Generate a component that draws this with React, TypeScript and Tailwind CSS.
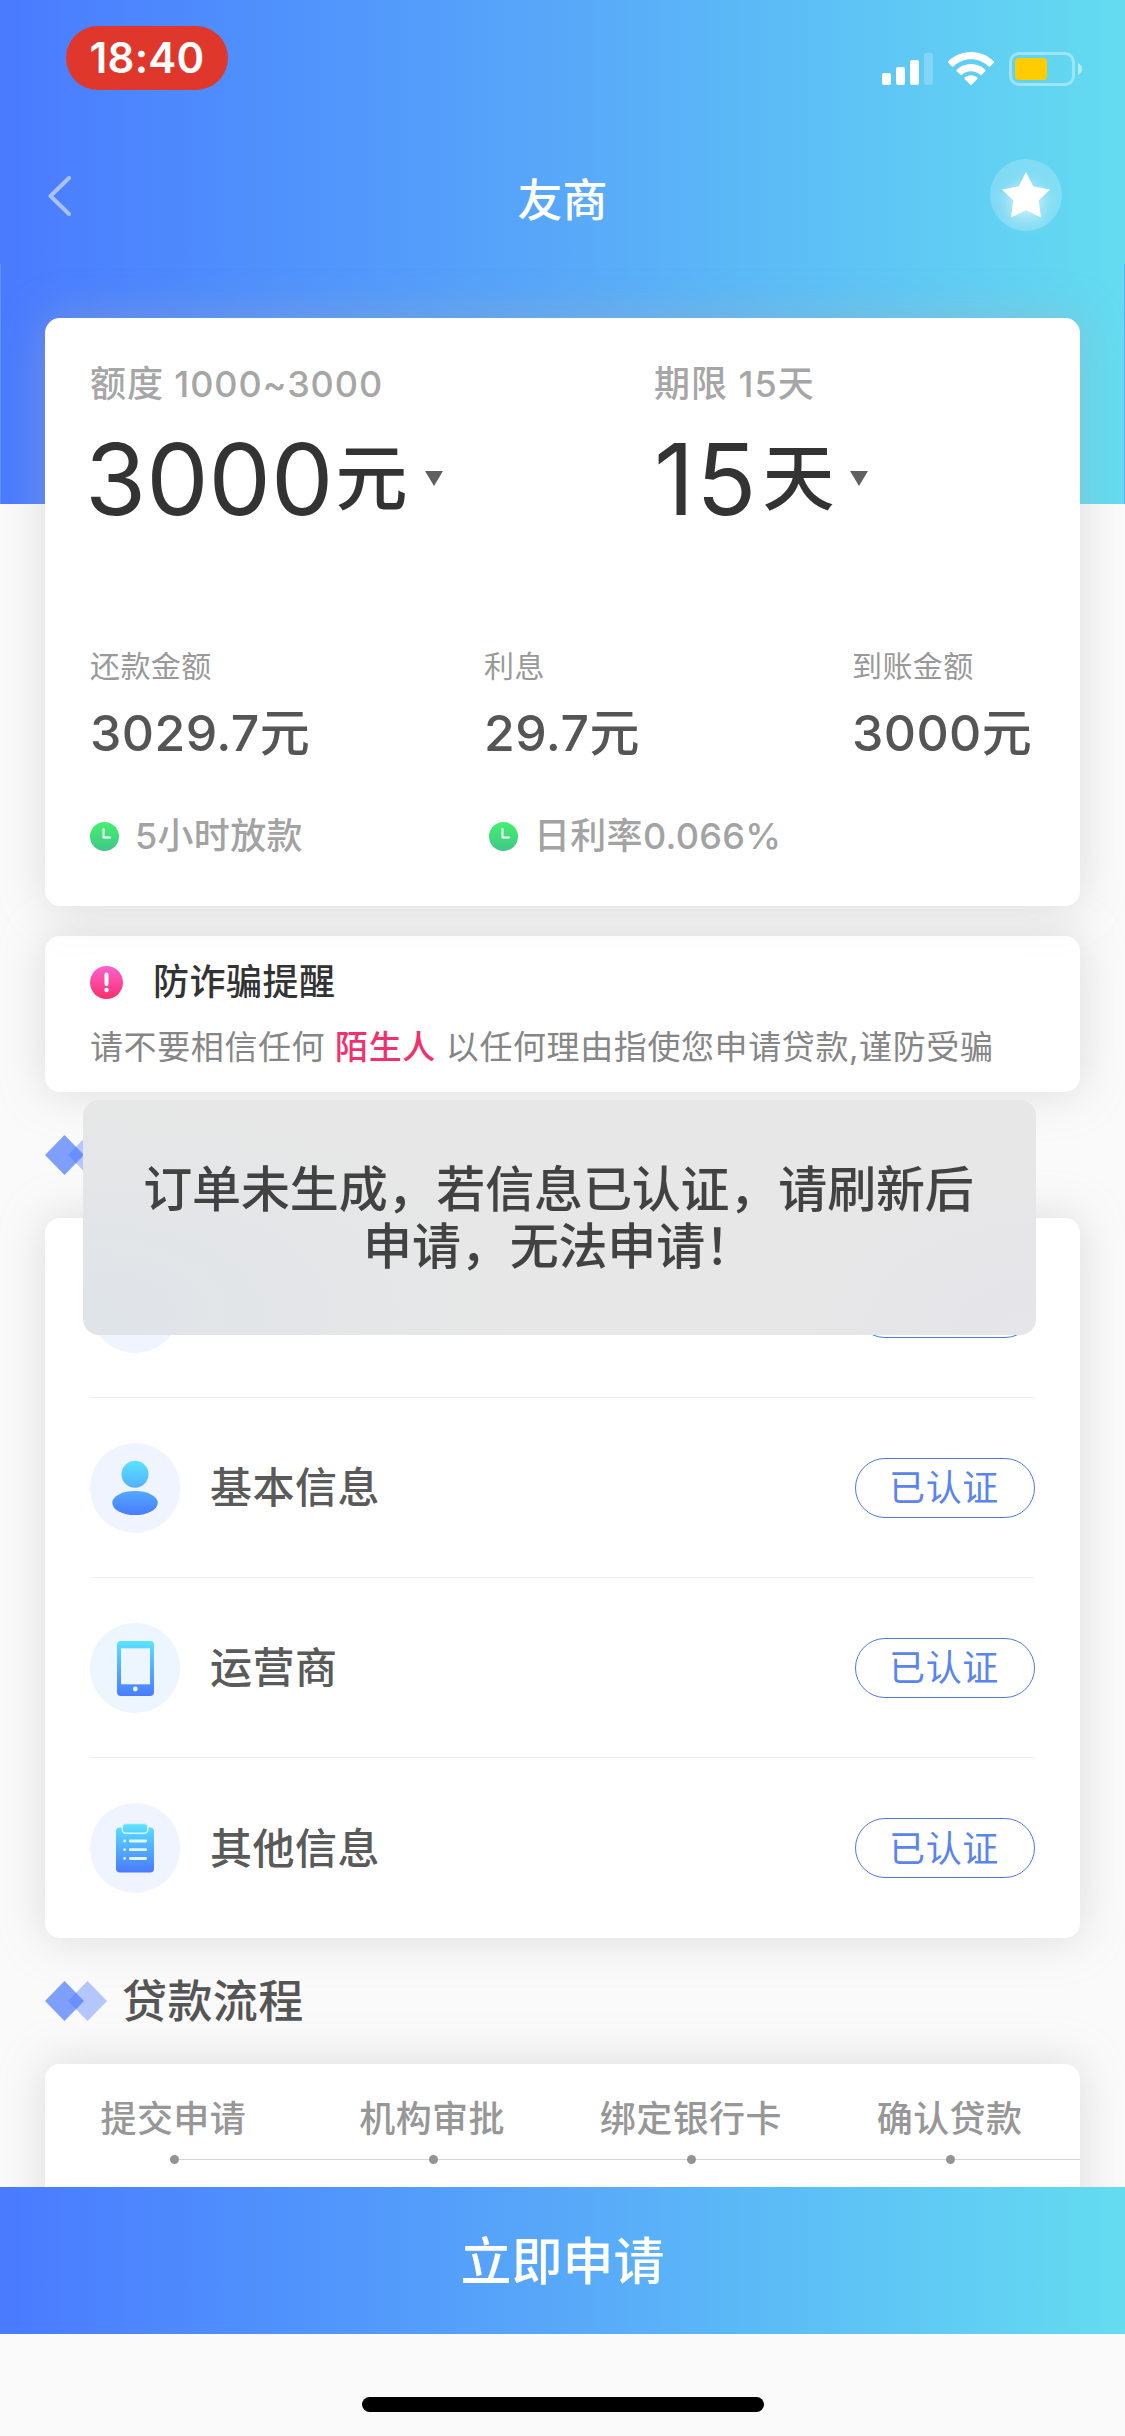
import React from 'react';

const loanFigures = [
  { label: '还款金额', value: '3029.7元', width: 'w-[394px]' },
  { label: '利息', value: '29.7元', width: 'w-[368px]' },
  { label: '到账金额', value: '3000元', width: '' },
];

const steps = ['提交申请', '机构审批', '绑定银行卡', '确认贷款'];

function StatusBar() {
  return (
    <div className="flex h-[120px] items-start justify-between pl-[66px] pr-[43px]">
      <div className="mt-[26px] flex h-16 w-[162px] items-center justify-center rounded-full bg-[#e0372d] text-[42px] font-semibold leading-none tracking-[0.3px] text-white">
        <span>18:40</span>
      </div>
      <div className="mt-[52px] flex h-[34px] items-center">
        <svg width="52" height="34" viewBox="0 0 52 34" fill="white">
          <rect x="0" y="21" width="9" height="12" rx="2" />
          <rect x="14" y="15" width="9" height="18" rx="2" />
          <rect x="28" y="8" width="9" height="25" rx="2" />
          <rect x="42" y="1" width="9" height="32" rx="2" opacity="0.22" />
        </svg>
        <svg className="ml-3.5" width="46" height="34" viewBox="0 0 46 34" fill="white">
          <path d="M23 0C14 0 6 3.600 0.300 9.300a1 1 0 0 0 0 1.500l3.600 3.600a1 1 0 0 0 1.500 0C10 10 16.200 7.300 23 7.300s13 2.700 17.600 7.100a1 1 0 0 0 1.500 0l3.600-3.600a1 1 0 0 0 0-1.500C40 3.600 32 0 23 0z" />
          <path d="M23 12c-5.500 0-10.600 2.200-14.300 5.700a1 1 0 0 0 0 1.500l3.700 3.600a1 1 0 0 0 1.400 0c2.400-2.200 5.600-3.500 9.200-3.500s6.800 1.300 9.200 3.500a1 1 0 0 0 1.400 0l3.700-3.600a1 1 0 0 0 0-1.500C33.600 14.200 28.500 12 23 12z" />
          <path d="M23 23.300c-2.400 0-4.600.9-6.300 2.300a1 1 0 0 0 0 1.500l5.600 5.600a1 1 0 0 0 1.400 0l5.600-5.600a1 1 0 0 0 0-1.500c-1.700-1.400-3.900-2.300-6.300-2.300z" />
        </svg>
        <svg className="ml-[15px]" width="73" height="34" viewBox="0 0 73 34" fill="none">
          <rect x="1.500" y="1.500" width="63" height="31" rx="8.500" stroke="white" strokeOpacity="0.38" strokeWidth="3" />
          <rect x="6" y="6" width="32" height="22" rx="4" fill="#ffcc00" />
          <path d="M69 11c2.500 1 4 3.400 4 6s-1.500 5-4 6z" fill="white" fillOpacity="0.5" />
        </svg>
      </div>
    </div>
  );
}

function NavBar() {
  return (
    <div className="flex h-36 items-start justify-between pl-12 pr-[63px] pt-[39px]">
      <svg className="mt-[17px]" width="72" height="40" viewBox="0 0 72 40" fill="none">
        <path d="M21 2L2.500 20L21 38" stroke="white" strokeOpacity="0.52" strokeWidth="4" strokeLinecap="round" strokeLinejoin="round" />
      </svg>
      <h1 className="ml-[15px] mt-[19px] text-[45px] font-medium leading-[45px] text-white">友商</h1>
      <div className="flex size-[72px] items-center justify-center rounded-full bg-white/20">
        <svg className="drop-shadow-[0_5px_8px_rgba(255,255,255,0.6)]" width="48" height="46" viewBox="0 0 48 46" fill="white">
          <path d="M24 0L31.200 14.200L48 17.600L36.700 28.600L39 45.500L24 38.300L9 45.500L11.300 28.600L0 17.600L16.800 14.200z" />
        </svg>
      </div>
    </div>
  );
}

function Triangle() {
  return (
    <svg className="-mt-0.5" width="18" height="15" viewBox="0 0 18 15" fill="#606060">
      <path d="M0 0H18L9 15z" />
    </svg>
  );
}

function ClockIcon() {
  return (
    <svg width="29" height="29" viewBox="0 0 29 29" fill="none">
      <defs>
        <linearGradient id="clock" x1="0" y1="0" x2="0" y2="1">
          <stop stopColor="#45f070" />
          <stop offset="1" stopColor="#3fc789" />
        </linearGradient>
      </defs>
      <circle cx="14.500" cy="14.500" r="14.500" fill="url(#clock)" />
      <path d="M13.500 7V15.500H20" stroke="white" strokeWidth="2" strokeLinecap="round" strokeLinejoin="round" />
    </svg>
  );
}

function AlertIcon() {
  return (
    <svg width="33" height="33" viewBox="0 0 33 33" fill="none">
      <defs>
        <linearGradient id="alert" x1="0" y1="0" x2="0" y2="1">
          <stop stopColor="#fb62cf" />
          <stop offset="1" stopColor="#fb2e6c" />
        </linearGradient>
      </defs>
      <circle cx="16.500" cy="16.500" r="16.500" fill="url(#alert)" />
      <path d="M16.500 8.500V18" stroke="white" strokeWidth="4" strokeLinecap="round" />
      <circle cx="16.500" cy="24" r="2.200" fill="white" />
    </svg>
  );
}

function IconGradient({ id, y1, y2 }: { id: string; y1: number; y2: number }) {
  return (
    <defs>
      <linearGradient id={id} gradientUnits="userSpaceOnUse" x1="0" y1={y1} x2="0" y2={y2}>
        <stop stopColor="#5be3ff" />
        <stop offset="1" stopColor="#4a7bff" />
      </linearGradient>
    </defs>
  );
}

function PersonIcon() {
  return (
    <svg width="90" height="90" viewBox="0 0 90 90">
      <IconGradient id="person" y1={18} y2={72} />
      <circle cx="45" cy="45" r="45" fill="#eff4ff" />
      <circle cx="45" cy="31.300" r="13.500" fill="url(#person)" />
      <ellipse cx="45" cy="60" rx="22.700" ry="12.100" fill="url(#person)" />
    </svg>
  );
}

function PhoneIcon() {
  return (
    <svg width="90" height="90" viewBox="0 0 90 90">
      <IconGradient id="phone" y1={18} y2={73} />
      <circle cx="45" cy="45" r="45" fill="#edf5fe" />
      <rect x="27" y="18" width="37" height="55" rx="4" fill="url(#phone)" />
      <rect x="31" y="25.300" width="29" height="36" fill="#edf5fe" />
      <circle cx="45.300" cy="66" r="2.400" fill="#edf5fe" />
    </svg>
  );
}

function ClipboardIcon() {
  return (
    <svg width="90" height="90" viewBox="0 0 90 90">
      <IconGradient id="clipboard" y1={21} y2={69} />
      <circle cx="45" cy="45" r="45" fill="#eff4ff" />
      <rect x="26" y="24.500" width="38" height="45" rx="4" fill="url(#clipboard)" />
      <rect x="32.300" y="20.500" width="25.500" height="9.800" rx="3.500" fill="url(#clipboard)" stroke="#d5f3ff" strokeWidth="1.500" />
      <g stroke="#e3f3ff" strokeWidth="2.800" strokeLinecap="round">
        <path d="M40.300 38H55.700M40.300 46.700H55.700M40.300 55.500H55.700" />
        <path d="M34.600 38h.01M34.600 46.700h.01M34.600 55.500h.01" />
      </g>
    </svg>
  );
}

const authItems = [
  { label: '', icon: <PersonIcon /> },
  { label: '基本信息', icon: <PersonIcon /> },
  { label: '运营商', icon: <PhoneIcon /> },
  { label: '其他信息', icon: <ClipboardIcon /> },
];

function SectionTitle({ title }: { title?: string }) {
  return (
    <div className="flex h-[126px] items-center gap-3.5 px-[45px]">
      <svg width="63" height="40" viewBox="0 0 63 40">
        <path d="M42.500 0L62 20L42.500 40L23 20z" fill="#4a78ff" fillOpacity="0.4" />
        <path d="M19.500 0L39 20L19.500 40L0 20z" fill="#4a78ff" fillOpacity="0.7" />
      </svg>
      {title && <h2 className="mt-px text-[45px] font-medium leading-[45px] tracking-[0.4px] text-[#555]">{title}</h2>}
    </div>
  );
}

function Toast() {
  return (
    <div className="absolute left-[83px] top-[1100px] flex h-[235px] w-[953px] flex-col items-center justify-center rounded-2xl bg-[#e7e7e7] bg-[radial-gradient(ellipse_45%_90%_at_0%_90%,#dfe4e9,transparent),radial-gradient(ellipse_30%_80%_at_100%_100%,#e5e5ea,transparent)] pr-0.5 text-[49px] font-medium leading-[57px] tracking-[-0.15px] text-[#424242]">
      <p className="whitespace-nowrap">订单未生成，若信息已认证，请刷新后</p>
      <p className="whitespace-nowrap">申请，无法申请！</p>
    </div>
  );
}

export default function App() {
  return (
    <div
      lang="zh-CN"
      className="relative flex h-[2436px] w-[1125px] flex-col overflow-hidden bg-[#fafafa] font-['Inter','Noto_Sans_CJK_SC',sans-serif]"
    >
      <div className="min-h-0 flex-1 overflow-hidden">
        {/* Header */}
        <header className="h-[504px] bg-linear-to-r from-[#4a7aff] via-[#58a8f9] to-[#64dcf0]">
          <StatusBar />
          <NavBar />
          <div className="h-60 border-x border-l-[#5c98fa] border-r-[#5cb2f7]"></div>
        </header>

        {/* Loan summary */}
        <section className="relative mx-[45px] -mt-[186px] h-[588px] rounded-[15px] bg-white pl-[45px] pt-12 shadow-[0_0_45px_rgba(175,175,175,0.4)]">
          <div className="flex">
            <div className="w-[564px]">
              <div className="text-[36px] font-medium leading-[36px] tracking-[0.9px] text-[#a6a6a6]">额度 1000~3000</div>
              <div className="mt-[27px] flex h-[100px] items-center text-[#333]">
                <span className="-ml-[5px] mr-0.5 text-[99px] leading-[100px]">3000</span>
                <span className="-mt-0.5 mr-[17px] text-[72px] font-medium leading-[72px]">元</span>
                <Triangle />
              </div>
            </div>
            <div>
              <div className="text-[36px] font-medium leading-[36px] tracking-[1px] text-[#a6a6a6]">期限 15天</div>
              <div className="mt-[27px] flex h-[100px] items-center text-[#333]">
                <span className="mr-1 text-[99px] leading-[100px] tracking-[2px]">15</span>
                <span className="-mt-0.5 mr-[16px] text-[72px] font-medium leading-[72px]">天</span>
                <Triangle />
              </div>
            </div>
          </div>

          <div className="mt-[122px] flex">
            {loanFigures.map((item) => (
              <div key={item.label} className={item.width}>
                <div className="text-[30px] leading-[30px] tracking-[0.4px] text-[#999]">{item.label}</div>
                <div className="mt-[27px] text-[50px] font-medium leading-[51px] tracking-[0.4px] text-[#555]">{item.value}</div>
              </div>
            ))}
          </div>

          <div className="mt-[59px] flex text-[36px] leading-[36px] tracking-[0.3px] text-[#a3a3a3]">
            <div className="flex w-[399px] items-center gap-4">
              <ClockIcon />
              <span className="font-medium">5小时放款</span>
            </div>
            <div className="flex items-center gap-4">
              <ClockIcon />
              <span className="font-medium">日利率0.066%</span>
            </div>
          </div>
        </section>

        {/* Fraud reminder */}
        <section className="mx-[45px] mt-[30px] h-[156px] rounded-[15px] bg-white px-[45px] pt-[30px] shadow-[0_0_45px_rgba(175,175,175,0.4)]">
          <div className="flex items-center gap-[30px]">
            <AlertIcon />
            <h3 className="text-[36px] font-medium leading-[33px] tracking-[0.5px] text-[#333]">防诈骗提醒</h3>
          </div>
          <p className="mt-8 whitespace-nowrap text-[33px] leading-[33px] tracking-[0.6px] text-[#868686]">
            请不要相信任何 <span className="font-medium text-[#f0306f]">陌生人</span> 以任何理由指使您申请贷款,谨防受骗
          </p>
        </section>

        <SectionTitle />

        {/* Verification list */}
        <section className="mx-[45px] h-[720px] rounded-[15px] bg-white px-[45px] shadow-[0_0_45px_rgba(175,175,175,0.4)]">
          {authItems.map((item, index) => (
            <div key={index} className="flex h-[180px] items-center border-b border-[#eee] last:border-b-0">
              {item.icon}
              <span className="ml-[30px] mt-px flex-1 text-[42px] font-medium leading-[42px] tracking-[0.5px] text-[#5a5a5a]">{item.label}</span>
              <span className="flex h-[60px] w-[180px] items-center justify-center rounded-full border-[1.5px] border-[#5078e4] pr-0.5 pt-px text-[36px] leading-[36px] tracking-[0.6px] text-[#5a84ee]">
                {item.label && '已认证'}
              </span>
            </div>
          ))}
        </section>

        <SectionTitle title="贷款流程" />

        {/* Loan steps */}
        <section className="mx-[45px] grid h-[300px] grid-cols-4 content-start rounded-[15px] bg-white pt-[37px] shadow-[0_0_45px_rgba(175,175,175,0.4)]">
          {steps.map((step, index) => (
            <div key={step} className="flex flex-col items-center">
              <span className="pr-0.5 text-[36px] font-medium leading-[36px] tracking-[0.4px] text-[#979797]">{step}</span>
              <div className="mt-[18px] flex h-[9px] w-full items-center">
                <div className={index === 0 ? 'h-px flex-1' : 'h-px flex-1 bg-[#d6d6d6]'}></div>
                <div className="size-[9px] rounded-full bg-[#949494]"></div>
                <div className="h-px flex-1 bg-[#d6d6d6]"></div>
              </div>
            </div>
          ))}
        </section>
      </div>

      {/* Submit */}
      <button className="relative h-[147px] w-full shrink-0 bg-linear-to-r from-[#4a7aff] via-[#58a8f9] to-[#64dcf0] pt-0.5 text-[51px] font-medium leading-[51px] text-white">
        立即申请
      </button>
      <div className="flex h-[102px] shrink-0 justify-center bg-[#fafafa] pt-[63px]">
        <div className="h-[15px] w-[402px] rounded-full bg-black"></div>
      </div>

      <Toast />
    </div>
  );
}
